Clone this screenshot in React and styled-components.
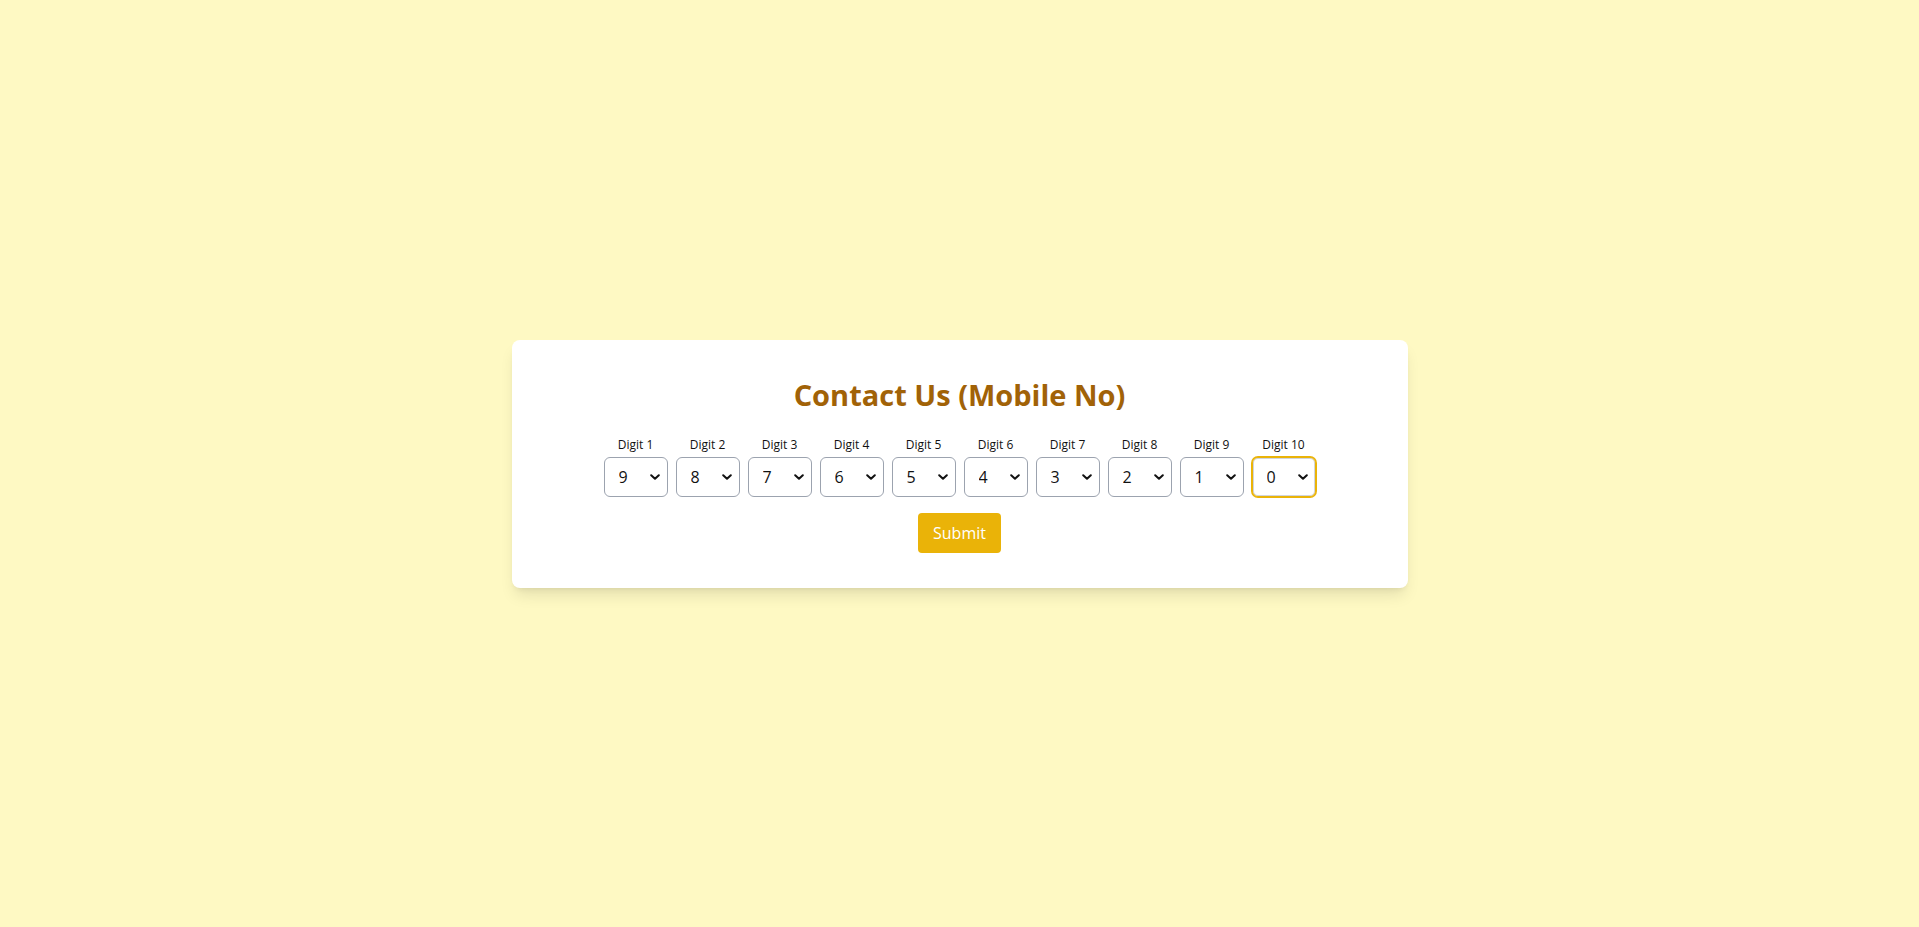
import React, { useState } from 'react';
import styled, { createGlobalStyle } from 'styled-components';

const GlobalStyle = createGlobalStyle`
    html, body {
        margin: 0;
        padding: 0;
    }
    body {
        background-color: #fef9c3;
        font-family: "Open Sans", "Noto Sans", "Liberation Sans", sans-serif;
    }
`

const digitLabels = ['Digit 1', 'Digit 2', 'Digit 3', 'Digit 4', 'Digit 5', 'Digit 6', 'Digit 7', 'Digit 8', 'Digit 9', 'Digit 10'];

function Chevron() {
    return (
        <ChevronIcon width="10" height="6" viewBox="0 0 10 6">
            <path d="M1.2 1.2 L5 4.8 L8.8 1.2" fill="none" stroke="#111" strokeWidth="2" strokeLinecap="round" strokeLinejoin="round" />
        </ChevronIcon>
    )
}

function App() {
    const [digits, setDigits] = useState(['9', '8', '7', '6', '5', '4', '3', '2', '1', '0']);

    const changeDigit = (index, value) => {
        const next = [...digits];
        next[index] = value;
        setDigits(next);
    }

    return (
        <Page>
            <GlobalStyle />
            <Card>
                <Title>Contact Us (Mobile No)</Title>
                <Form onSubmit={(e) => e.preventDefault()}>
                    <DigitRow>
                        {
                            digitLabels.map((label, i) => (
                                <DigitField key={label}>
                                    <Label htmlFor={`digit-${i}`}>{label}</Label>
                                    <SelectWrap>
                                        <Select
                                            id={`digit-${i}`}
                                            value={digits[i]}
                                            focused={i === 9}
                                            onChange={(e) => changeDigit(i, e.target.value)}
                                        >
                                            {
                                                Array(10).fill().map((_, n) => <option key={n} value={String(n)}>{n}</option>)
                                            }
                                        </Select>
                                        <Chevron />
                                    </SelectWrap>
                                </DigitField>
                            ))
                        }
                    </DigitRow>
                    <SubmitButton type="submit">Submit</SubmitButton>
                </Form>
            </Card>
        </Page>
    )
}

export default App

const Page = styled.div`
    min-height: 100vh;
    display: flex;
    align-items: center;
    justify-content: center;
`

const Card = styled.div`
    width: 896px;
    box-sizing: border-box;
    background-color: white;
    border-radius: 8px;
    padding: 37px 32px 35px;
    box-shadow: 0 10px 15px -3px rgba(0, 0, 0, 0.1), 0 4px 6px -4px rgba(0, 0, 0, 0.1);
    text-align: center;
`

const Title = styled.h2`
    margin: 0 0 24px;
    font-size: 29px;
    line-height: 36px;
    font-weight: 700;
    color: #a16207;
`

const Form = styled.form`
    display: flex;
    flex-direction: column;
    align-items: center;
`

const DigitRow = styled.div`
    display: flex;
    justify-content: center;
    gap: 8px;
`

const DigitField = styled.div`
    display: flex;
    flex-direction: column;
    align-items: center;
`

const Label = styled.label`
    font-size: 12px;
    line-height: 16px;
    color: #111;
    margin-bottom: 4px;
`

const SelectWrap = styled.div`
    position: relative;
`

const Select = styled.select.withConfig({ shouldForwardProp: (prop) => prop !== 'focused' })`
    appearance: none;
    -webkit-appearance: none;
    width: 64px;
    height: 40px;
    box-sizing: border-box;
    padding: 0 12px 0 14px;
    font-family: inherit;
    font-size: 16px;
    color: #111;
    background-color: white;
    border: 1px solid ${props => props.focused ? '#eab308' : '#9ca3af'};
    border-radius: 6px;
    box-shadow: ${props => props.focused ? '0 0 0 1px #eab308, inset 0 0 0 1px #d1d5db' : 'none'};
    outline: none;
    cursor: pointer;
`

const ChevronIcon = styled.svg`
    position: absolute;
    right: 8px;
    top: 17px;
    pointer-events: none;
`

const SubmitButton = styled.button`
    margin-top: 16px;
    height: 40px;
    padding: 0 15px;
    font-family: inherit;
    font-size: 16px;
    color: white;
    background-color: #eab308;
    border: none;
    border-radius: 4px;
    cursor: pointer;
`
